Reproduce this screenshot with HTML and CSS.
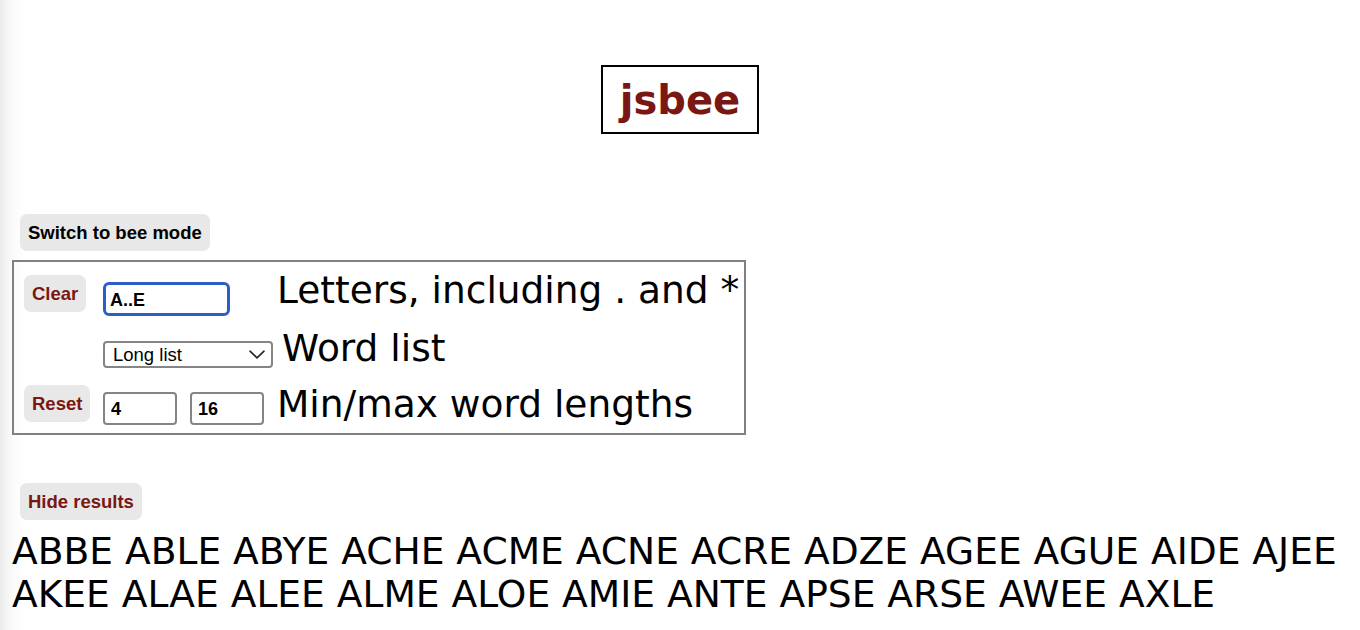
FILE: index.html
```html
<!DOCTYPE html>
<html lang="en">
<head>
<meta charset="utf-8">
<title>jsbee</title>
<link rel="stylesheet" href="styles.css">
</head>
<body>
<header class="masthead">
  <h1 class="logo">jsbee</h1>
</header>
<div class="mode-row">
  <button class="btn btn-dark" type="button">Switch to bee mode</button>
</div>
<div class="panel">
  <button class="btn btn-red r1" type="button">Clear</button>
  <input class="field field-letters r1" type="text" value="A..E">
  <div class="label">Letters, including . and *</div>

  <div class="spacer"></div>
  <div class="select-wrap r2">
    <select class="select">
      <option>Long list</option>
      <option>Short list</option>
    </select>
    <svg class="chev" width="16" height="9" viewBox="0 0 16 9" aria-hidden="true"><path d="M1 1.2 L8 7.8 L15 1.2" fill="none" stroke="#222" stroke-width="1.6" stroke-linecap="round" stroke-linejoin="round"/></svg>
  </div>
  <div class="label label-list">Word list</div>

  <button class="btn btn-red r3" type="button">Reset</button>
  <div class="lengths r3b">
    <input class="field field-num" type="text" value="4">
    <input class="field field-num" type="text" value="16">
  </div>
  <div class="label">Min/max word lengths</div>
</div>
<div class="results-bar">
  <button class="btn btn-red" type="button">Hide results</button>
</div>
<p class="results">ABBE ABLE ABYE ACHE ACME ACNE ACRE ADZE AGEE AGUE AIDE AJEE AKEE ALAE ALEE ALME ALOE AMIE ANTE APSE ARSE AWEE AXLE</p>
</body>
</html>
```
FILE: styles.css
```css
html {
  background: #fff;
}
body {
  margin: 0;
  padding: 0 12px;
  min-height: 630px;
  box-sizing: border-box;
  background: linear-gradient(to right, #ebebeb 0, #f6f6f6 8px, #fcfcfc 16px, #fff 26px);
  font-family: "DejaVu Sans", Verdana, sans-serif;
  color: #000;
}
.masthead {
  text-align: center;
  padding-top: 65px;
}
.logo {
  display: inline-block;
  margin: 0;
  border: 2px solid #000;
  padding: 9.5px 17px;
  font-family: "DejaVu Sans", Verdana, sans-serif;
  font-weight: bold;
  font-size: 40px;
  line-height: normal;
  color: #7a1712;
}
.mode-row {
  margin-top: 80px;
  padding-left: 8px;
}
.btn {
  font-family: "Liberation Sans", Arial, sans-serif;
  font-weight: bold;
  font-size: 18.5px;
  line-height: 21px;
  padding: 8px 8px;
  border: none;
  border-radius: 7px;
  background: #e8e8e8;
  cursor: pointer;
}
.btn-dark {
  color: #000;
}
.btn-red {
  color: #7a1712;
}
.panel {
  margin-top: 9px;
  width: fit-content;
  border: 2px solid #808080;
  padding: 7px 5px 7px 10px;
  display: grid;
  grid-template-columns: 79px 174px auto;
  grid-template-rows: 58px 56px 43px;
  align-items: start;
}
.label {
  font-size: 37.5px;
  line-height: 43px;
  white-space: nowrap;
  margin-left: 0;
}
.label-list {
  margin-left: 5px;
}
.r1 {
  margin-top: 6px;
  justify-self: start;
}
.r3 {
  margin-top: 2px;
  justify-self: start;
}
.field {
  box-sizing: border-box;
  font-family: "Liberation Sans", Arial, sans-serif;
  font-weight: bold;
  font-size: 18px;
  color: #000;
  background: #fff;
  outline: none;
}
.field-letters {
  margin-top: 13px;
  width: 127px;
  height: 34px;
  border: 3px solid #2c5fc6;
  border-radius: 6px;
  padding: 2px 4px 0;
}
.field-num {
  width: 74px;
  height: 33px;
  border: 2px solid #858585;
  border-radius: 4px;
  padding: 2px 6px 0;
}
.lengths {
  margin-top: 9px;
  display: flex;
  gap: 13px;
}
.select-wrap {
  position: relative;
  margin-top: 14px;
  width: 170px;
  height: 27px;
}
.select {
  appearance: none;
  -webkit-appearance: none;
  box-sizing: border-box;
  width: 170px;
  height: 27px;
  border: 2px solid #858585;
  border-radius: 4px;
  background: #fff;
  font-family: "Liberation Sans", Arial, sans-serif;
  font-size: 18.5px;
  color: #000;
  padding: 0 8px;
  line-height: 23px;
}
.chev {
  position: absolute;
  right: 8px;
  top: 9px;
  pointer-events: none;
}
.results-bar {
  margin-top: 48px;
  padding-left: 8px;
}
.results {
  margin: 10px 0 0;
  font-size: 37.6px;
  line-height: 43px;
}
```
